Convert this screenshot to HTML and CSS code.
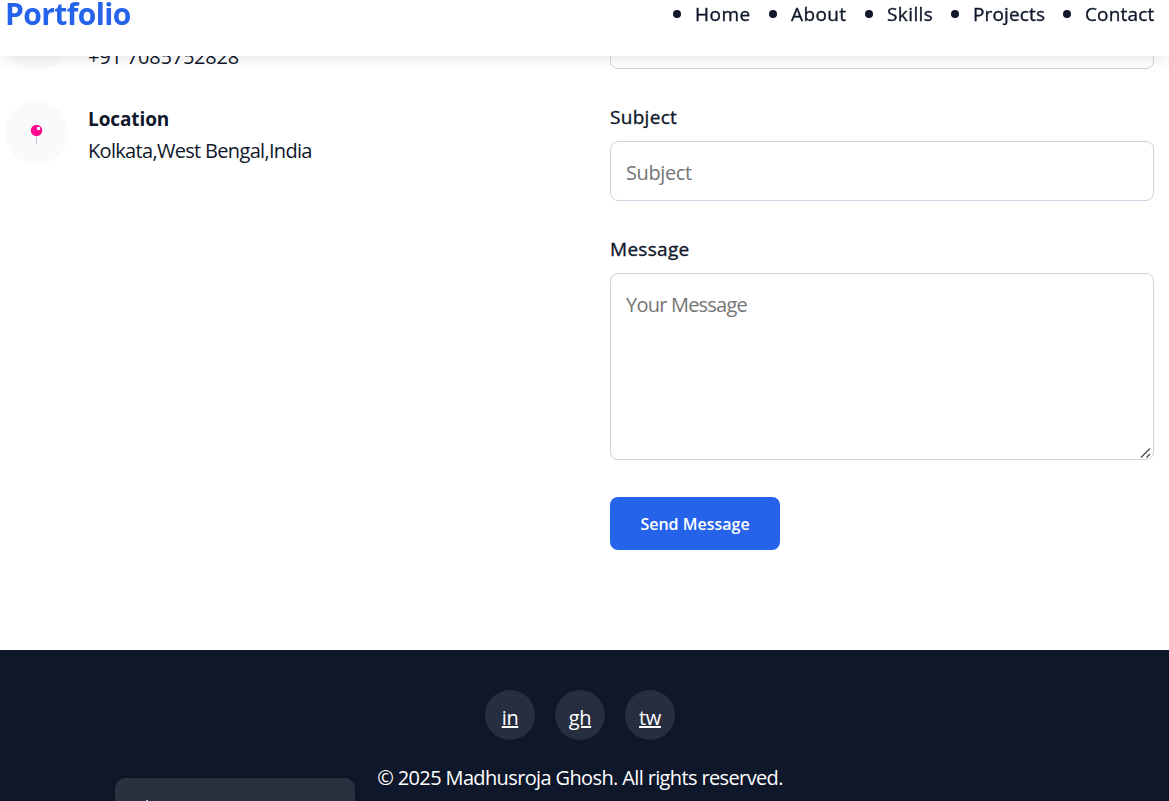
FILE: index.html
```html
<!DOCTYPE html>
<html lang="en">
<head>
<meta charset="utf-8">
<title>Portfolio</title>
<link rel="stylesheet" href="styles.css">
</head>
<body>
<header class="header">
  <a class="logo">Portfolio</a>
  <ul class="nav">
    <li class="nav-home">Home</li>
    <li class="nav-about">About</li>
    <li class="nav-skills">Skills</li>
    <li class="nav-projects">Projects</li>
    <li class="nav-contact">Contact</li>
  </ul>
</header>
<main class="contact">
  <section class="info">
    <div class="info-item">
      <div class="info-icon"></div>
      <div class="info-text"><p class="phone">+91 7085752828</p></div>
    </div>
    <div class="info-item">
      <div class="info-icon">
        <svg class="pin" width="13" height="21" viewBox="0 0 13 21"><path d="M6.5 11v9.500" stroke="#c9cbce" stroke-width="1"/><circle cx="6.500" cy="6.500" r="5.700" fill="#ff0a8e"/><rect x="7" y="3" width="3" height="3" rx=".5" fill="#fff"/></svg>
      </div>
      <div class="info-text"><h3>Location</h3><p class="place">Kolkata,West Bengal,India</p></div>
    </div>
  </section>
  <form class="form">
    <input class="field" type="email">
    <label class="label">Subject</label>
    <input class="field ph-subject" type="text" placeholder="Subject">
    <label class="label">Message</label>
    <div class="area-box">
      <textarea class="field area" placeholder="Your Message"></textarea>
      <svg class="grip" width="12" height="12" viewBox="0 0 12 12"><path d="M1 10.500L10 1.500M6.500 10.500L10 7" fill="none" stroke="#555" stroke-width="1.500"/></svg>
    </div>
    <button class="send" type="button">Send Message</button>
  </form>
</main>
<footer class="footer">
  <div class="social">
    <a>in</a><a>gh</a><a>tw</a>
  </div>
  <p class="copy">© 2025 Madhusroja Ghosh. All rights reserved.</p>
</footer>
<div class="toast"></div>
</body>
</html>
```
FILE: styles.css
```css
* { box-sizing: border-box; margin: 0; padding: 0; }
body {
  height: 801px;
  overflow: hidden;
  background: #fff;
  color: #0f172a;
  font: 20px/32px "Open Sans", "Noto Sans", sans-serif;
  white-space: nowrap;
}
.header {
  position: fixed;
  top: 0; left: 0; right: 0;
  z-index: 2;
  height: 56px;
  padding: 0 15px 0 5px;
  display: flex;
  justify-content: space-between;
  background: #fff;
  box-shadow: 0 2px 15px rgba(0, 0, 0, .1);
}
.logo { font-size: 30px; font-weight: 700; line-height: 28px; color: #2563eb; letter-spacing: -.6px; }
.nav { display: flex; gap: 40px; list-style: none; font-size: 19px; line-height: 28px; letter-spacing: .15px; -webkit-text-stroke: .35px; }
.nav li { position: relative; }
.nav li::before {
  content: "";
  position: absolute;
  left: -22px; top: 10px;
  width: 8px; height: 8px;
  border-radius: 50%;
  background: #0f172a;
}
.nav-home { width: 56px; letter-spacing: .5px; }
.nav-about { width: 56px; }
.nav-about, .nav-skills { letter-spacing: .4px; }
.nav-skills { width: 46px; }
.nav-projects { width: 72px; }
.nav-contact { width: 69px; }
.contact {
  height: 650px;
  display: grid;
  grid-template-columns: 544px 544px;
  gap: 61px;
  padding: 9px 15px 0 5px;
}
.info { display: flex; flex-direction: column; gap: 31px; margin-top: -2px; }
.info-item { display: flex; gap: 20px; height: 63px; }
.info-icon {
  width: 63px; height: 63px;
  border-radius: 50%;
  background: #f8fafc;
  display: flex;
  align-items: center;
  justify-content: center;
}
.pin { margin-top: 3px; margin-left: -1px; }
.info-text { display: flex; flex-direction: column; justify-content: flex-end; height: 66px; }
.info-text h3 { font-size: 19px; font-weight: 700; line-height: 32px; letter-spacing: -.1px; }
.phone { letter-spacing: -.2px; }
.place { letter-spacing: -.68px; }
.form { display: flex; flex-direction: column; align-items: flex-start; }
.label { font-size: 19px; line-height: 32px; margin: 32px 0 8px; letter-spacing: .3px; -webkit-text-stroke: .35px; }
.field {
  flex: none;
  display: block;
  width: 544px; height: 60px;
  padding: 14px 15px 11px;
  border: 1px solid #cbd5e1;
  border-radius: 8px;
  background: #fff;
  font: 20px/32px "Open Sans", "Noto Sans", sans-serif;
}
.ph-subject { padding: 13px 15px 11px; letter-spacing: -.4px; }
.field::placeholder { color: #757575; }
.area-box { position: relative; }
.area { height: 187px; padding-top: 15px; resize: none; letter-spacing: -.78px; }
.grip { position: absolute; right: 2px; bottom: 1px; }
.send {
  width: 170px; height: 53px;
  margin-top: 37px;
  border: 0;
  border-radius: 8px;
  background: #2563eb;
  color: #fff;
  font: 600 16px/24px "Open Sans", "Noto Sans", sans-serif;
}
.footer { height: 151px; padding: 40px 9px 0 0; background: #0f172a; color: #fff; text-align: center; }
.social { display: flex; justify-content: center; gap: 20px; }
.social a {
  width: 50px; height: 50px;
  padding-top: 3px;
  border-radius: 50%;
  background: #272e3f;
  line-height: 49px;
  letter-spacing: -.4px;
  text-decoration: underline;
}
.copy { margin-top: 22px; letter-spacing: -.63px; }
.toast {
  position: fixed;
  left: 115px; top: 778px;
  width: 240px; height: 60px;
  border-radius: 10px;
  background: #29303e;
  box-shadow: 0 0 4px rgba(0, 0, 0, .3);
}
.toast::before {
  content: "";
  position: absolute;
  left: 31px; top: 22px;
  width: 2px; height: 2px;
  background: #c5c8cd;
}
```
